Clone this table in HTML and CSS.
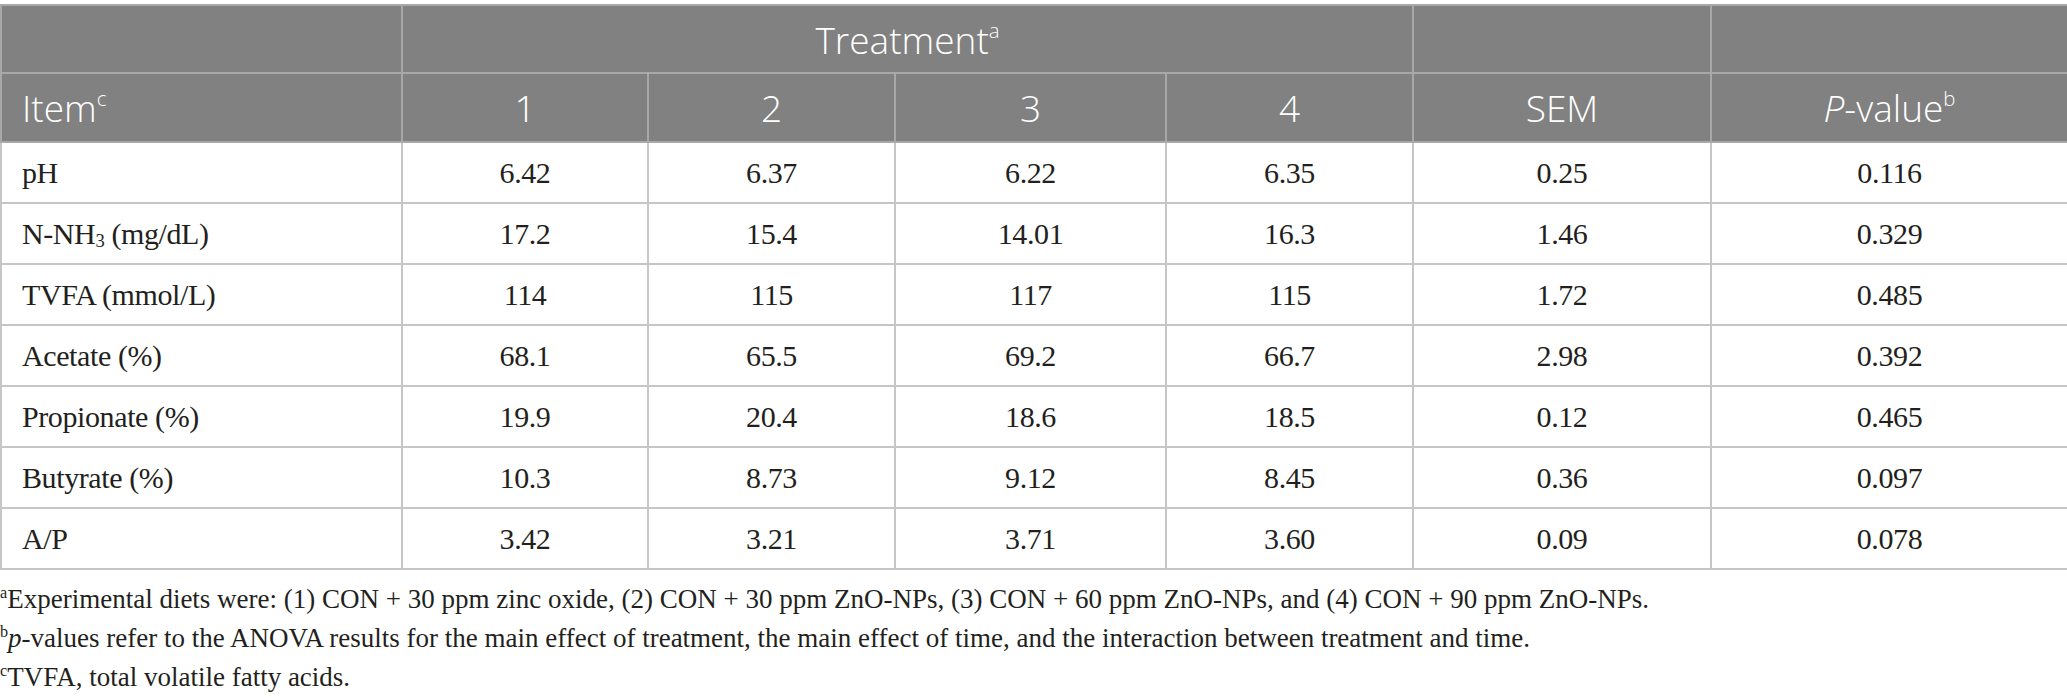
FILE: index.html
```html
<!DOCTYPE html>
<html>
<head>
<meta charset="utf-8">
<title>Table</title>
<link rel="stylesheet" href="styles.css">
</head>
<body>
<div class="wrap">
  <table class="data">
    <colgroup>
      <col class="c-item">
      <col class="c-1">
      <col class="c-2">
      <col class="c-3">
      <col class="c-4">
      <col class="c-sem">
      <col class="c-p">
    </colgroup>
    <thead>
      <tr class="hrow1">
        <th></th>
        <th colspan="4">Treatment<sup>a</sup></th>
        <th></th>
        <th></th>
      </tr>
      <tr class="hrow2">
        <th class="left">Item<sup>c</sup></th>
        <th>1</th>
        <th>2</th>
        <th>3</th>
        <th>4</th>
        <th>SEM</th>
        <th><i>P</i>-value<sup>b</sup></th>
      </tr>
    </thead>
    <tbody>
      <tr><td class="left">pH</td><td>6.42</td><td>6.37</td><td>6.22</td><td>6.35</td><td>0.25</td><td>0.116</td></tr>
      <tr><td class="left">N-NH<sub>3</sub> (mg/dL)</td><td>17.2</td><td>15.4</td><td>14.01</td><td>16.3</td><td>1.46</td><td>0.329</td></tr>
      <tr><td class="left">TVFA (mmol/L)</td><td>114</td><td>115</td><td>117</td><td>115</td><td>1.72</td><td>0.485</td></tr>
      <tr><td class="left">Acetate (%)</td><td>68.1</td><td>65.5</td><td>69.2</td><td>66.7</td><td>2.98</td><td>0.392</td></tr>
      <tr><td class="left">Propionate (%)</td><td>19.9</td><td>20.4</td><td>18.6</td><td>18.5</td><td>0.12</td><td>0.465</td></tr>
      <tr><td class="left">Butyrate (%)</td><td>10.3</td><td>8.73</td><td>9.12</td><td>8.45</td><td>0.36</td><td>0.097</td></tr>
      <tr><td class="left">A/P</td><td>3.42</td><td>3.21</td><td>3.71</td><td>3.60</td><td>0.09</td><td>0.078</td></tr>
    </tbody>
  </table>
  <div class="notes">
    <p><sup>a</sup>Experimental diets were: (1) CON + 30 ppm zinc oxide, (2) CON + 30 ppm ZnO-NPs, (3) CON + 60 ppm ZnO-NPs, and (4) CON + 90 ppm ZnO-NPs.</p>
    <p><sup>b</sup><i>p</i>-values refer to the ANOVA results for the main effect of treatment, the main effect of time, and the interaction between treatment and time.</p>
    <p><sup>c</sup>TVFA, total volatile fatty acids.</p>
  </div>
</div>
</body>
</html>
```

FILE: styles.css
```css
html, body {
  margin: 0;
  padding: 0;
  background: #ffffff;
}

.wrap {
  padding-top: 4px;
  width: 2067px;
}

.data {
  border-collapse: collapse;
  table-layout: fixed;
  width: 2067px;
}

.c-item { width: 401px; }
.c-1 { width: 246px; }
.c-2 { width: 247px; }
.c-3 { width: 271px; }
.c-4 { width: 247px; }
.c-sem { width: 298px; }
.c-p { width: 357px; }

.data th {
  background: #808180;
  color: #ffffff;
  font-family: "Open Sans", "Noto Sans", sans-serif;
  font-weight: 300;
  font-size: 37px;
  text-align: center;
  vertical-align: middle;
  border: 2px solid #a7a8a7;
  padding: 0 20px;
  line-height: 1;
}

.data th sup {
  font-size: 55%;
  vertical-align: 0.8em;
  line-height: 0;
}

.hrow1 th { height: 66px; }
.hrow2 th { height: 67px; }

.data td {
  font-family: "Liberation Serif", "Times New Roman", serif;
  font-size: 30px;
  letter-spacing: -0.4px;
  color: #231f20;
  text-align: center;
  vertical-align: middle;
  border: 2px solid #c6c6c6;
  height: 59px;
  padding: 0 20px;
  line-height: 1;
}

.data .left {
  text-align: left;
}

.data td sub {
  font-size: 62%;
  vertical-align: -0.15em;
  line-height: 0;
}

.notes {
  margin-top: 10px;
  font-family: "Liberation Serif", "Times New Roman", serif;
  font-size: 27px;
  letter-spacing: 0;
  color: #231f20;
  line-height: 39px;
}

.notes p {
  margin: 0;
}

.notes sup {
  font-size: 60%;
  vertical-align: 0.6em;
  line-height: 0;
}
```
